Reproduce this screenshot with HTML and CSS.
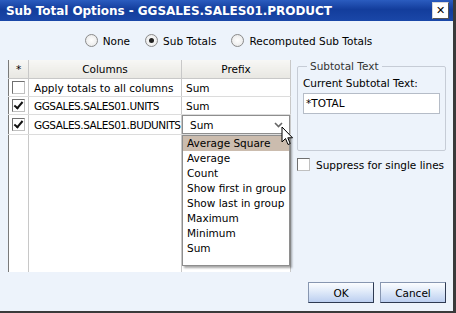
FILE: index.html
```html
<!DOCTYPE html>
<html lang="en">
<head>
    <meta charset="UTF-8">
    <title>Sub Total Options</title>
    <link rel="stylesheet" href="styles.css">
</head>
<body>
    <div class="dialog">
        <div class="titlebar">
            <span class="title">Sub Total Options - GGSALES.SALES01.PRODUCT</span>
            <span class="close">&#x2715;</span>
        </div>

        <div class="modes">
            <label class="mode"><span class="radio"></span>None</label>
            <label class="mode"><span class="radio checked"></span>Sub Totals</label>
            <label class="mode"><span class="radio"></span>Recomputed Sub Totals</label>
        </div>

        <div class="main">
            <table class="grid">
                <thead>
                    <tr>
                        <th class="col-star">*</th>
                        <th class="col-name">Columns</th>
                        <th class="col-prefix">Prefix</th>
                    </tr>
                </thead>
                <tbody>
                    <tr>
                        <td class="col-star"><span class="check"></span></td>
                        <td>Apply totals to all columns</td>
                        <td class="prefix">Sum</td>
                    </tr>
                    <tr>
                        <td class="col-star"><span class="check checked"></span></td>
                        <td class="caps">GGSALES.SALES01.UNITS</td>
                        <td class="prefix">Sum</td>
                    </tr>
                    <tr>
                        <td class="col-star"><span class="check checked"></span></td>
                        <td class="caps">GGSALES.SALES01.BUDUNITS</td>
                        <td class="prefix editing">
                            <div class="select">
                                <span class="select-value">Sum</span>
                                <svg class="chevron" width="9" height="6" viewBox="0 0 9 6">
                                    <path d="M1 1 L4.5 4.5 L8 1" fill="none" stroke="#666" stroke-width="1.6"/>
                                </svg>
                                <ul class="options">
                                    <li class="active">Average Square</li>
                                    <li>Average</li>
                                    <li>Count</li>
                                    <li>Show first in group</li>
                                    <li>Show last in group</li>
                                    <li>Maximum</li>
                                    <li>Minimum</li>
                                    <li>Sum</li>
                                </ul>
                                <svg class="cursor" width="13" height="21" viewBox="0 0 13 21">
                                    <path d="M1 1 L1 16 L4.5 12.5 L7 18.5 L9.2 17.6 L6.8 11.8 L11.5 11.8 Z" fill="#fff" stroke="#000" stroke-width="1" stroke-linejoin="round"/>
                                </svg>
                            </div>
                        </td>
                    </tr>
                    <tr class="filler">
                        <td class="col-star"></td>
                        <td></td>
                        <td></td>
                    </tr>
                </tbody>
            </table>

            <div class="side">
                <fieldset class="group">
                    <legend>Subtotal Text</legend>
                    <div class="field-label">Current Subtotal Text:</div>
                    <div class="textbox">*TOTAL</div>
                </fieldset>
                <label class="suppress"><span class="check"></span>Suppress for single lines</label>
            </div>
        </div>

        <div class="buttons">
            <button class="btn">OK</button>
            <button class="btn">Cancel</button>
        </div>
    </div>
</body>
</html>
```

FILE: styles.css
```css
body {
    margin: 0;
    padding: 0;
    font-family: "DejaVu Sans", Verdana, sans-serif;
    font-size: 10.5px;
    color: #000;
    background-color: #edf3fb;
}

.dialog {
    width: 453px;
    height: 311px;
    background-color: #edf3fb;
    border-right: 3px solid #3a3a3a;
    border-bottom: 2px solid #3a3a3a;
    display: flex;
    flex-direction: column;
}

.titlebar {
    height: 21px;
    display: flex;
    align-items: center;
    justify-content: space-between;
    padding: 0 4px 0 6px;
    background: linear-gradient(#2b5cbf, #133d9c 45%, #1a47a8);
}

.title {
    color: #fff;
    font-weight: bold;
    font-size: 12px;
    letter-spacing: -0.05px;
}

.close {
    width: 15px;
    height: 15px;
    background-color: #fff;
    border: 1px solid #d8d8d8;
    border-right-color: #555;
    border-bottom-color: #555;
    color: #000;
    font-size: 11px;
    font-weight: bold;
    line-height: 15px;
    text-align: center;
}

.modes {
    display: flex;
    justify-content: center;
    gap: 15px;
    margin-top: 12px;
    padding-left: 4px;
    height: 15px;
    align-items: center;
}

.mode {
    display: flex;
    align-items: center;
    gap: 5px;
}

.radio {
    width: 11px;
    height: 11px;
    border-radius: 50%;
    border: 1px solid #8a8a8a;
    background: radial-gradient(#ffffff, #e4e4e4);
    position: relative;
}

.radio.checked::after {
    content: "";
    position: absolute;
    left: 3px;
    top: 3px;
    width: 5px;
    height: 5px;
    border-radius: 50%;
    background-color: #222;
}

.main {
    display: flex;
    margin-top: 12px;
    padding-left: 8px;
    gap: 6px;
}

.grid {
    width: 283px;
    height: 212px;
    border-collapse: collapse;
    background-color: #fff;
    border-left: 1px solid #7a7a7a;
    border-right: 1px solid #c8c8c8;
    table-layout: fixed;
}

.grid th {
    height: 18px;
    padding: 0;
    font-weight: normal;
    background: linear-gradient(#f7f7f5, #e8e7e2);
    border-right: 1px solid #c8c8c8;
    border-bottom: 1px solid #c8c8c8;
    text-align: center;
}

.col-star {
    width: 19px;
}

.col-prefix {
    width: 108px;
}

.grid td {
    height: 17px;
    padding: 0 0 0 5px;
    border-right: 1px solid #c8c8c8;
    border-bottom: 1px solid #dcdcdc;
    white-space: nowrap;
    overflow: visible;
}

.grid td.caps {
    letter-spacing: -0.45px;
}

.grid td.col-star {
    padding: 0 0 0 3px;
}

.grid td.prefix {
    padding-left: 4px;
}

.grid td.editing {
    padding: 0;
}

.grid .filler td {
    height: auto;
    border-bottom: none;
}

.check {
    display: inline-block;
    vertical-align: middle;
    width: 11px;
    height: 11px;
    border: 1px solid #707070;
    border-right-color: #c0c0c0;
    border-bottom-color: #c0c0c0;
    background-color: #fff;
    position: relative;
}

.check.checked::after {
    content: "";
    position: absolute;
    left: 3px;
    top: 0px;
    width: 3px;
    height: 7px;
    border: solid #111;
    border-width: 0 2px 2px 0;
    transform: rotate(40deg);
}

.select {
    position: relative;
    height: 17px;
    border: 1px solid #8e8e8e;
    background-color: #fff;
    display: flex;
    align-items: center;
    justify-content: space-between;
    padding: 0 6px 0 7px;
}

.chevron {
    display: block;
}

.options {
    position: absolute;
    top: 19px;
    left: -1px;
    width: 106px;
    margin: 0;
    padding: 0 0 9px 0;
    list-style: none;
    background-color: #fff;
    border: 1px solid #8e8e8e;
    box-shadow: 2px 2px 2px rgba(0, 0, 0, 0.35);
    z-index: 2;
}

.options li {
    height: 15px;
    line-height: 15px;
    padding-left: 4px;
}

.options li.active {
    background-color: #cbbcae;
}

.cursor {
    position: absolute;
    left: 98px;
    top: 10px;
    z-index: 3;
}

.side {
    width: 149px;
    display: flex;
    flex-direction: column;
}

.group {
    margin: 0;
    padding: 4px 5px 0 5px;
    height: 85px;
    border: 1px solid #c6ccd6;
    border-radius: 2px;
}

.group legend {
    padding: 0 3px;
    margin-left: 4px;
    color: #333;
}

.field-label {
    margin-top: 1px;
}

.textbox {
    margin-top: 4px;
    width: 133px;
    height: 19px;
    line-height: 19px;
    padding-left: 2px;
    background-color: #fff;
    border: 1px solid #b5bcc7;
}

.suppress {
    display: flex;
    align-items: center;
    gap: 6px;
    margin-top: 7px;
}

.buttons {
    margin-top: auto;
    margin-bottom: 8px;
    display: flex;
    justify-content: flex-end;
    gap: 6px;
    padding-right: 7px;
}

.btn {
    width: 66px;
    height: 21px;
    font-family: inherit;
    font-size: inherit;
    background: linear-gradient(#fbfdff, #e0eaf9 45%, #bccff0);
    border: 1px solid #8796b0;
    border-right-color: #2e3a52;
    border-bottom-color: #2e3a52;
    padding: 0;
}
```
